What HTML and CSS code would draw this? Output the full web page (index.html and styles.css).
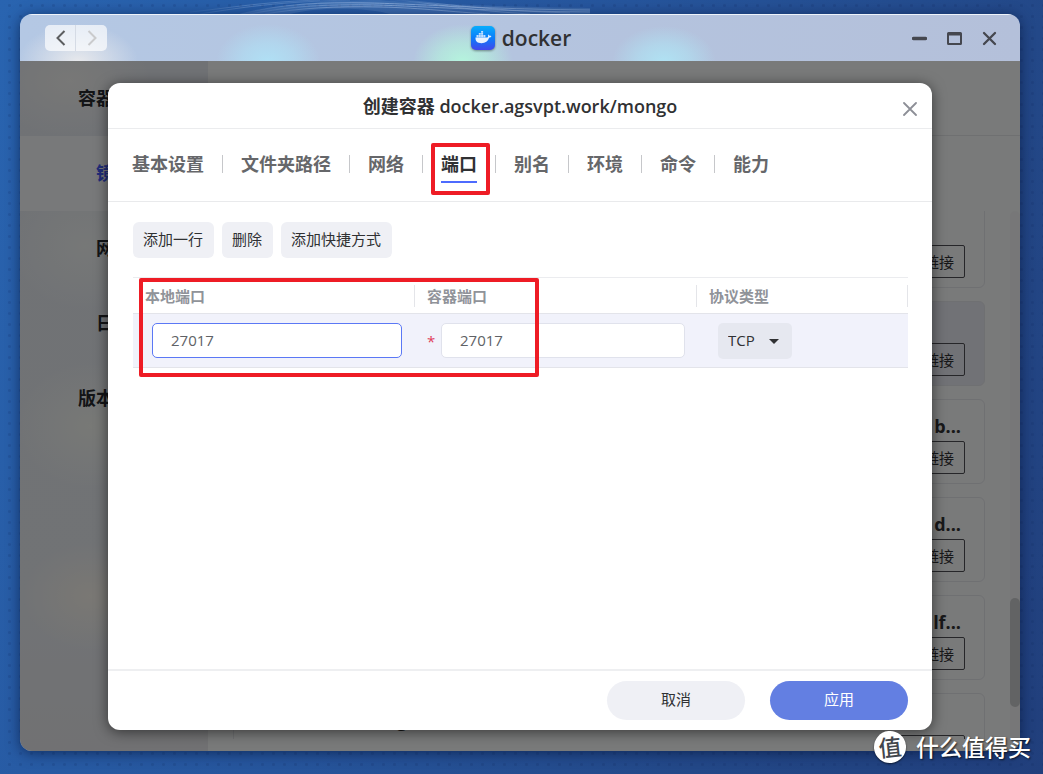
FILE: index.html
```html
<!DOCTYPE html>
<html lang="zh-CN">
<head>
<meta charset="utf-8">
<title>docker</title>
<link rel="stylesheet" href="styles.css">
</head>
<body class="desktop">
<svg class="waves" viewBox="0 0 400 14" width="400" height="14" aria-hidden="true">
  <defs><linearGradient id="wave" x1="0" x2="1"><stop offset="0" stop-color="#a9c4ea" stop-opacity=".1"/><stop offset=".35" stop-color="#a9c4ea" stop-opacity=".6"/><stop offset="1" stop-color="#a9c4ea" stop-opacity=".4"/></linearGradient></defs>
  <path fill="#a9c4ea" opacity=".16" d="M50 14C90 5 130 0 190 0C230 3 280 6 400 8V14H200C180 8 130 6 100 14z"/>
  <g fill="none" stroke="url(#wave)" stroke-width="1">
    <path d="M50 14C90 4 130 2 180 3S290 9 400 10"/>
    <path d="M60 14C100 6 140 4 185 5S290 11 400 12"/>
    <path d="M75 14C110 8 145 6 190 7S260 12 300 14"/>
    <path opacity=".7" d="M200 0C240 2 270 10 340 14"/>
    <path opacity=".7" d="M212 0C250 3 290 10 380 13"/>
    <path opacity=".5" d="M0 12C40 8 70 2 130 0M10 14C60 6 90 2 160 0"/>
  </g>
</svg>
<div class="window">
  <header class="titlebar">
    <div class="history">
      <button class="history-btn" type="button" aria-label="后退"><svg width="10" height="16" viewBox="0 0 10 16"><path d="M8.500 1 1.500 8l7 7" fill="none" stroke="#5c5e60" stroke-width="2"/></svg></button>
      <button class="history-btn history-next" type="button" aria-label="前进"><svg width="10" height="16" viewBox="0 0 10 16"><path d="M1.500 1l7 7-7 7" fill="none" stroke="#cacbcd" stroke-width="2"/></svg></button>
    </div>
    <div class="app-name">
      <svg class="app-icon" width="24" height="24" viewBox="0 0 24 24" aria-hidden="true">
        <defs><linearGradient id="ic" x1="0" y1="0" x2="0" y2="1"><stop offset="0" stop-color="#08adfc"/><stop offset=".5" stop-color="#0b7dfa"/><stop offset="1" stop-color="#4447ec"/></linearGradient></defs>
        <rect width="24" height="24" rx="5" fill="url(#ic)"/>
        <path fill="#e9f3ff" d="M4.500 11.500h11.700c.8-.2 1-.9.9-1.600-.2-.6 0-1.100.4-1.500.7.4 1 .9 1.100 1.500.6-.1 1.300 0 1.800.4-.4.9-1.200 1.300-2.200 1.300-1.200 3.700-3.700 5.600-7.700 5.600-4 0-6.300-1.900-6-5.700z"/>
        <path fill="#c4e0ff" d="M5.500 9h2v2.500h-2zm2.300 0h2v2.500h-2zm2.300 0h2v2.500h-2zm2.300 0h2v2.500h-2zM7.800 7h2v1.800h-2zm2.300 0h2v1.800h-2zm0-2h2v1.800h-2z"/>
      </svg>
      <span>docker</span>
    </div>
    <div class="controls">
      <button class="control" type="button" aria-label="最小化"><svg width="15" height="15" viewBox="0 0 15 15"><path d="M1.500 7.500h12" stroke="#45474f" stroke-width="3.500" stroke-linecap="round"/></svg></button>
      <button class="control" type="button" aria-label="最大化"><svg width="15" height="15" viewBox="0 0 15 15"><path fill="#45474f" fill-rule="evenodd" d="M1.500 1h12A1.500 1.500 0 0 1 15 2.500v10a1.500 1.500 0 0 1-1.500 1.500h-12A1.500 1.500 0 0 1 0 12.500v-10A1.500 1.500 0 0 1 1.500 1zM2 4.500V12h11V4.500z"/></svg></button>
      <button class="control" type="button" aria-label="关闭"><svg width="15" height="15" viewBox="0 0 15 15"><path d="M2 2l11 11M13 2L2 13" stroke="#45474f" stroke-width="2.300" stroke-linecap="round"/></svg></button>
    </div>
  </header>
  <div class="workspace">
    <nav class="sidebar">
      <a class="side-link" href="#containers">容器管理</a>
      <a class="side-link side-active" href="#images">镜像</a>
      <a class="side-link" href="#networks">网络</a>
      <a class="side-link" href="#logs">日志</a>
      <a class="side-link" href="#version">版本信息</a>
    </nav>
    <section class="main">
      <div class="toolbar"></div>
      <div class="image-list">
        <article class="card"><h3 class="card-name"></h3><button class="card-btn" type="button">链接</button></article>
        <article class="card card-hover"><h3 class="card-name"></h3><button class="card-btn" type="button">链接</button></article>
        <article class="card"><h3 class="card-name">b...</h3><button class="card-btn" type="button">链接</button></article>
        <article class="card"><h3 class="card-name">d...</h3><button class="card-btn" type="button">链接</button></article>
        <article class="card"><h3 class="card-name">lf...</h3><button class="card-btn" type="button">链接</button></article>
        <article class="card"><h3 class="card-name card-name-start">mongo</h3><button class="card-btn card-btn-wide" type="button" aria-label="链接"></button></article>
      </div>
      <div class="scrollbar"><div class="thumb"></div></div>
    </section>
    <div class="overlay">
      <div class="dialog" role="dialog" aria-labelledby="dialog-title">
        <header class="dialog-head">
          <h2 class="dialog-title" id="dialog-title">创建容器 docker.agsvpt.work/mongo</h2>
          <button class="dialog-close" type="button" aria-label="关闭"><svg width="14" height="14" viewBox="0 0 14 14"><path d="M1 1l12 12M13 1L1 13" stroke="#8d8f97" stroke-width="1.800" stroke-linecap="round"/></svg></button>
        </header>
        <nav class="tabs">
          <a class="tab" href="#basic">基本设置</a>
          <a class="tab" href="#folders">文件夹路径</a>
          <a class="tab" href="#net">网络</a>
          <a class="tab tab-active" href="#ports"><span class="tab-label">端口</span></a>
          <a class="tab" href="#alias">别名</a>
          <a class="tab" href="#env">环境</a>
          <a class="tab" href="#cmd">命令</a>
          <a class="tab" href="#caps">能力</a>
        </nav>
        <div class="content">
          <div class="actions">
            <button class="action" type="button">添加一行</button>
            <button class="action" type="button">删除</button>
            <button class="action" type="button">添加快捷方式</button>
          </div>
          <div class="ports">
            <table class="port-table">
              <colgroup><col class="col-port"><col class="col-port"><col></colgroup>
              <thead>
                <tr><th><div class="th-text" id="h-local">本地端口</div></th><th><div class="th-text" id="h-container">容器端口</div></th><th><div class="th-text" id="h-proto">协议类型</div></th></tr>
              </thead>
              <tbody>
                <tr>
                  <td><div class="cell cell-local"><input class="field field-focus" type="text" value="27017" aria-labelledby="h-local"></div></td>
                  <td><div class="cell cell-container"><span class="required">*</span><input class="field" type="text" value="27017" aria-labelledby="h-container"></div></td>
                  <td><div class="cell cell-proto"><div class="select-wrap"><select class="select" aria-labelledby="h-proto"><option>TCP</option><option>UDP</option></select></div></div></td>
                </tr>
              </tbody>
            </table>
            <div class="mark mark-ports"></div>
          </div>
        </div>
        <footer class="dialog-foot">
          <button class="pill" type="button">取消</button>
          <button class="pill pill-primary" type="button">应用</button>
        </footer>
      </div>
    </div>
  </div>
</div>
<div class="watermark"><span class="badge">值</span><span>什么值得买</span></div>
</body>
</html>
```

FILE: styles.css
```css
* { box-sizing: border-box; }

.desktop {
  margin: 0;
  min-height: 100vh;
  padding: 14px 23px 23px 20px;
  display: flex;
  position: relative;
  overflow: hidden;
  font-family: "Open Sans", "Noto Sans CJK SC", sans-serif;
  font-size: 15px;
  color: #303133;
  background:
    radial-gradient(circle, rgba(10, 30, 80, .14) 1px, transparent 2px) 4px 0 / 11px 11px,
    linear-gradient(115deg, #2964b0 0%, #26559c 45%, #234888 75%, #213f7c 100%);
}
.desktop button, .desktop input, .desktop select { font: inherit; color: inherit; }
.desktop button { border: 0; padding: 0; cursor: pointer; }
.desktop a { text-decoration: none; }

.waves { position: absolute; top: 0; left: 190px; }

.window {
  flex: 1;
  min-width: 0;
  display: flex;
  flex-direction: column;
  position: relative;
  border-radius: 12px;
  overflow: hidden;
  box-shadow: 0 2px 14px rgba(0, 15, 50, .6);
}

.titlebar {
  height: 47px;
  display: grid;
  grid-template-columns: 1fr auto 1fr;
  align-items: center;
  padding: 0 23px 0 25px;
  border-top: 1px solid #eef3fa;
  background:
    radial-gradient(ellipse 60px 38px at 58px 47px, #e8e9ec, rgba(232, 233, 236, .5) 50%, rgba(232, 233, 236, 0)),
    radial-gradient(ellipse 52px 38px at 248px 47px, #b0e0f5, rgba(176, 224, 245, .6) 50%, rgba(176, 224, 245, 0)),
    radial-gradient(ellipse 50px 38px at 443px 47px, #b5f4dd, rgba(181, 244, 221, .6) 50%, rgba(181, 244, 221, 0)),
    radial-gradient(ellipse 52px 36px at 644px 47px, #b0e2f3, rgba(176, 226, 243, .6) 50%, rgba(176, 226, 243, 0)),
    linear-gradient(90deg, #b4c8e4, #b4c0da);
}
.history { display: flex; }
.history-btn {
  width: 31px;
  height: 26px;
  display: grid;
  place-items: center;
  border-radius: 5px 0 0 5px;
  background: rgba(255, 255, 255, .68);
}
.history-next { border-radius: 0 5px 5px 0; box-shadow: -1px 0 #d5dbe5; }
.app-name {
  display: flex;
  align-items: center;
  gap: 7px;
  font-size: 21px;
  line-height: 24px;
  font-weight: 600;
}
.app-icon { filter: drop-shadow(0 1px 1px rgba(0, 0, 0, .4)); }
.controls { display: flex; justify-content: flex-end; gap: 20px; }
.control { width: 15px; height: 15px; display: grid; background: none; }

.workspace { flex: 1; display: flex; position: relative; min-height: 0; }
.sidebar {
  width: 188px;
  background:
    radial-gradient(ellipse 80px 55px at 50px 20px, #f0f0ee, rgba(240, 240, 238, 0)),
    radial-gradient(ellipse 75px 65px at 65px 185px, #edf0ef, rgba(237, 240, 239, 0)),
    radial-gradient(ellipse 75px 65px at 70px 365px, #f0f2ed, rgba(240, 242, 237, 0)),
    radial-gradient(ellipse 70px 55px at 70px 535px, #f4f0e8, rgba(244, 240, 232, 0)),
    linear-gradient(#e1e5eb 0%, #e2e6eb 80%, #e3e3e6 100%);
}
.side-link {
  display: block;
  line-height: 75px;
  text-align: center;
  font-size: 18px;
  font-weight: 700;
  color: #26282c;
}
.side-active { color: #4358f0; background: #f1f2f4; }
.main {
  flex: 1;
  min-width: 0;
  display: grid;
  grid-template-columns: 1fr 10px;
  grid-template-rows: 75px 1fr;
  row-gap: 75px;
  padding-bottom: 12px;
  background: #f3f4f5;
}
.toolbar { grid-column: 1 / 3; border-bottom: 1px solid #dfe0e3; }
.image-list {
  height: 0;
  min-height: 100%;
  overflow: hidden;
  padding: 0 25px;
  display: flex;
  flex-direction: column;
  gap: 13px;
}
.card {
  flex: none;
  height: 85px;
  padding: 14px 19px 9px 24px;
  border: 1px solid #dfe1e5;
  border-radius: 6px;
  display: flex;
  flex-direction: column;
  align-items: flex-end;
  justify-content: space-between;
}
.card:first-child { margin-top: -8px; }
.card-hover { background: #e3e4ec; }
.card-name {
  margin: 0;
  min-height: 24px;
  padding-right: 4px;
  font-size: 18px;
  line-height: 24px;
  font-weight: 700;
}
.card-name-start { align-self: flex-start; padding-left: 98px; }
.desktop .card-btn {
  height: 33px;
  padding: 0 10px 1px;
  border: 1px solid #4c4d52;
  border-radius: 2px;
  background: none;
}
.card-btn-wide { width: 81px; }
.scrollbar { border-radius: 5px; background: #eeeff0; padding-top: 387px; }
.thumb { height: 109px; border-radius: 5px; background: #c5c6c8; }

.overlay {
  position: absolute;
  inset: 0;
  padding: 22px 88px 21px;
  display: flex;
  background: rgba(0, 0, 0, .5);
}
.dialog {
  flex: 1;
  min-width: 0;
  display: flex;
  flex-direction: column;
  border-radius: 12px;
  background: #fff;
  box-shadow: 0 2px 14px rgba(0, 0, 0, .55);
}
.dialog-head {
  height: 46px;
  display: grid;
  grid-template-columns: 1fr auto 1fr;
  align-items: center;
  padding: 0 15px;
  border-bottom: 1px solid #ebecee;
}
.dialog-title { grid-column: 2; margin: 0; font-size: 18px; line-height: 24px; font-weight: 600; }
.dialog-close { justify-self: end; margin-top: 6px; width: 14px; height: 14px; display: grid; background: none; }

.tabs {
  height: 73px;
  display: flex;
  align-items: center;
  padding: 0 24px 2px;
  border-bottom: 1px solid #e9eaec;
  font-size: 18px;
  line-height: 18px;
  font-weight: 700;
}
.tab { position: relative; padding: 0 18px; color: #66676a; border-left: 1px solid #c6c7ca; }
.tab:first-child { padding-left: 0; border-left: 0; }
.tab-active { color: #303133; }
.tab-active::before {
  content: "";
  position: absolute;
  inset: -12px 5px -22px 8px;
  border: 4px solid #ee1c25;
  border-radius: 2px;
}
.tab-label::after {
  content: "";
  position: absolute;
  left: 18px;
  right: 18px;
  bottom: -10px;
  height: 2px;
  background: #4d6bfe;
}

.content { flex: 1; padding: 20px 24px 20px 25px; }
.actions { display: flex; gap: 8px; }
.desktop .action { height: 36px; padding: 0 11px 3px 10px; border-radius: 6px; background: #eff0f5; }
.ports { position: relative; margin-top: 19px; }
.port-table { width: 100%; table-layout: fixed; border-collapse: collapse; border-top: 1px solid #ebecef; }
.col-port { width: 282px; }
.port-table th, .port-table td { padding: 0; text-align: left; border-bottom: 1px solid #e3e4ea; }
.port-table th { height: 36px; color: #909399; font-weight: 700; }
.th-text { padding-left: 12px; line-height: 22px; border-right: 1px solid #e4e5e9; }
.port-table td { height: 54px; background: #f1f2fb; }
.cell { display: flex; align-items: center; }
.cell-local { padding: 0 13px 0 19px; }
.cell-container { padding: 0 12px; }
.cell-proto { padding-left: 21px; }
.required { width: 14px; color: #e0405a; }
.desktop .field {
  flex: 1;
  min-width: 0;
  height: 35px;
  padding: 0 18px 2px;
  border: 1px solid #e0e2ec;
  border-radius: 5px;
  outline: 0;
  background: #fff;
  color: #606266;
}
.desktop .field-focus { border-color: #5b78f5; }
.select-wrap { position: relative; }
.select {
  appearance: none;
  width: 74px;
  height: 36px;
  padding: 0 10px 2px;
  border: 0;
  border-radius: 5px;
  background: #e6e8f0;
}
.select-wrap::after {
  content: "";
  position: absolute;
  right: 13px;
  top: 16px;
  border: 5px solid transparent;
  border-top-color: #303133;
  border-bottom: 0;
  pointer-events: none;
}
.mark-ports {
  position: absolute;
  left: 6px;
  top: 1px;
  width: 400px;
  height: 99px;
  border: 4px solid #ee1c25;
  border-radius: 2px;
  pointer-events: none;
}

.dialog-foot {
  height: 61px;
  display: flex;
  justify-content: flex-end;
  align-items: center;
  gap: 25px;
  padding: 0 24px 1px;
  border-top: 2px solid #eeeff1;
}
.desktop .pill { width: 138px; height: 39px; padding-bottom: 3px; border-radius: 20px; background: #eff0f5; }
.desktop .pill-primary { background: #637fe2; color: #fff; }

.watermark {
  position: absolute;
  right: 12px;
  bottom: 11px;
  display: flex;
  align-items: center;
  gap: 10px;
  color: #fff;
  font-size: 23px;
  line-height: 32px;
  font-weight: 500;
  text-shadow: 1px 1px 2px rgba(0, 0, 0, .7);
}
.badge {
  width: 32px;
  height: 32px;
  border-radius: 50%;
  background: #fff;
  color: #42464d;
  text-align: center;
  font-weight: 500;
  transform: rotate(-6deg);
  text-shadow: none;
  box-shadow: 0 1px 2px rgba(0, 0, 0, .6);
}
```
